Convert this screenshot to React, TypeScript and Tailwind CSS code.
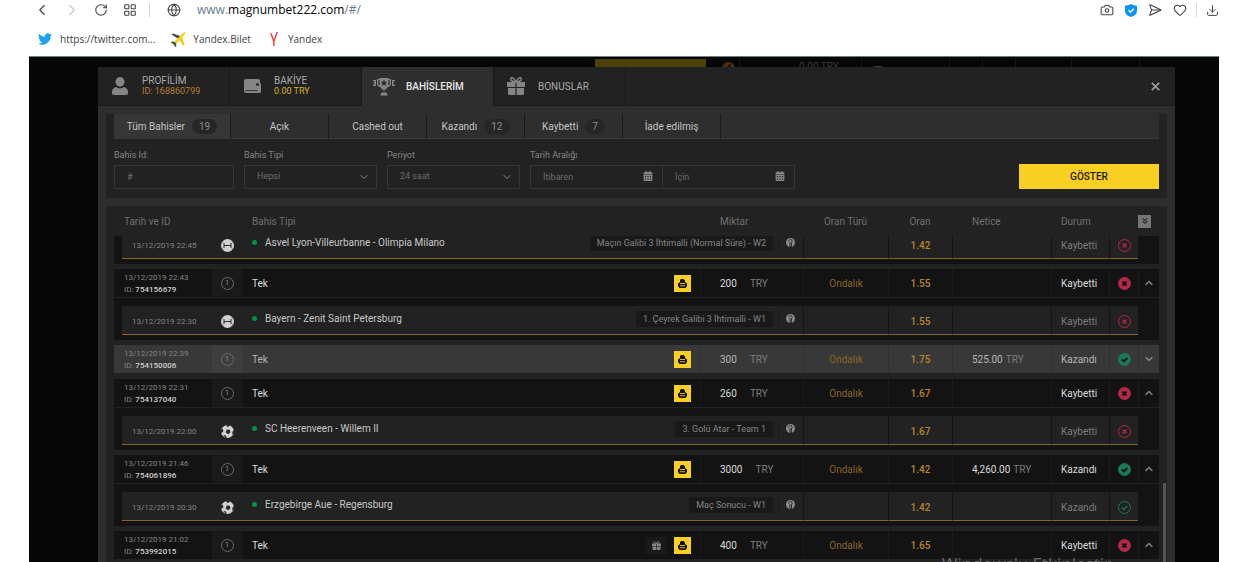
import React from 'react';
import {
  Camera,
  ChevronDown,
  ChevronLeft,
  ChevronRight,
  ChevronUp,
  ChevronsDown,
  Download,
  Globe,
  Heart,
  LayoutGrid,
  RotateCw,
  SendHorizontal,
} from 'lucide-react';
import { FaCalendarAlt, FaTwitter, FaYandexInternational } from 'react-icons/fa';

type Sport = 'basketball' | 'soccer';

type Bet = {
  date: string;
  id: string;
  amount: string;
  odd: string;
  result?: string;
  won: boolean;
  gift?: boolean;
  collapsed?: boolean;
};

type Leg = {
  date: string;
  sport: Sport;
  teams: string;
  pick: string;
  odd: string;
  won: boolean;
};

const columns =
  'grid grid-cols-[98px_30px_minmax(0,1fr)_103px_85px_64px_99px_58px_29px_21px]';

const rows: { bet?: Bet; leg?: Leg }[] = [
  {
    leg: {
      date: '13/12/2019 22:45',
      sport: 'basketball',
      teams: 'Asvel Lyon-Villeurbanne - Olimpia Milano',
      pick: 'Maçın Galibi 3 İhtimalli (Normal Süre) - W2',
      odd: '1.42',
      won: false,
    },
  },
  {
    bet: { date: '13/12/2019 22:43', id: '754156679', amount: '200', odd: '1.55', won: false },
    leg: {
      date: '13/12/2019 22:30',
      sport: 'basketball',
      teams: 'Bayern - Zenit Saint Petersburg',
      pick: '1. Çeyrek Galibi 3 İhtimalli - W1',
      odd: '1.55',
      won: false,
    },
  },
  {
    bet: {
      date: '13/12/2019 22:39',
      id: '754150006',
      amount: '300',
      odd: '1.75',
      result: '525.00',
      won: true,
      collapsed: true,
    },
  },
  {
    bet: { date: '13/12/2019 22:31', id: '754137040', amount: '260', odd: '1.67', won: false },
    leg: {
      date: '13/12/2019 22:00',
      sport: 'soccer',
      teams: 'SC Heerenveen - Willem II',
      pick: '3. Golü Atar - Team 1',
      odd: '1.67',
      won: false,
    },
  },
  {
    bet: {
      date: '13/12/2019 21:46',
      id: '754061896',
      amount: '3000',
      odd: '1.42',
      result: '4,260.00',
      won: true,
    },
    leg: {
      date: '13/12/2019 20:30',
      sport: 'soccer',
      teams: 'Erzgebirge Aue - Regensburg',
      pick: 'Maç Sonucu - W1',
      odd: '1.42',
      won: true,
    },
  },
  {
    bet: {
      date: '13/12/2019 21:02',
      id: '753992015',
      amount: '400',
      odd: '1.65',
      won: false,
      gift: true,
    },
  },
];

const UserIcon = () => (
  <svg width="16" height="18" viewBox="0 0 16 18" fill="#858585">
    <ellipse cx="8" cy="4.800" rx="4.500" ry="4.800" />
    <path d="M4 10c1.200.9 2.600 1.400 4 1.400s2.800-.5 4-1.400c2.200.6 4 2.500 4 4.700V16a2 2 0 0 1-2 2H2a2 2 0 0 1-2-2v-1.300C0 12.500 1.800 10.600 4 10z" />
  </svg>
);

const WalletIcon = () => (
  <svg width="17" height="14" viewBox="0 0 17 14" fill="#858585">
    <path d="M2 0h12a2 2 0 0 1 2 2v2a1 1 0 0 1 1 1v7.500a1.500 1.500 0 0 1-1.500 1.500H2a2 2 0 0 1-2-2V2a2 2 0 0 1 2-2z" />
    <path d="M12 4.500h3v2h-3zM1.500 11h12v.8h-12z" fill="#222222" />
  </svg>
);

const TrophyIcon = () => (
  <svg width="22" height="20" viewBox="0 0 22 20" fill="#858585">
    <path fillRule="evenodd" d="M6.500 1h9v1H18v4.500c0 2-1.500 3.500-3.500 3.800-.9 1.400-1.800 2.200-3 2.400V14h-1v-1.300c-1.200-.2-2.100-1-3-2.400C5.500 10 4 8.500 4 6.500V2h2.500zM5.300 3.300v3c0 1 .6 1.900 1.500 2.300-.3-1.600-.3-3.400-.3-5.300zm11.400 0h-1.200c0 1.900 0 3.700-.3 5.300.9-.4 1.500-1.300 1.500-2.300z" />
    <path d="m11 2.500 1 2.200 2.400.3-1.800 1.600.5 2.300L11 7.700 8.900 8.900l.5-2.300L7.600 5l2.400-.3z" fill="#2e2e2e" />
    <path d="M7.500 18c0-1.800 1.500-2.800 3.500-2.800s3.500 1 3.500 2.800v.5h-7z" />
    <path d="M0 3h3v6H0V7.800h1.500V6.600H.5V5.400h1V4.200H0zM19 3h3v1.200h-1.500v3.600H22V9h-3z" />
  </svg>
);

const GiftIcon = ({ size = 18, dark = '#222222' }: { size?: number; dark?: string }) => (
  <svg width={size} height={size} viewBox="0 0 18 18" fill="#858585">
    <path d="M0 5h18v5H0zM1 11h16v5.500a1.500 1.500 0 0 1-1.500 1.500h-13A1.500 1.500 0 0 1 1 16.500z" />
    <path d="M8.400 5h1.200v13H8.400z" fill={dark} />
    <path d="M9 5C7 1 5 0 4 1.300S4.500 5 9 5zm0 0c2-4 4-5 5-3.700S13.500 5 9 5z" fill="none" stroke="#858585" strokeWidth="1.500" />
  </svg>
);

const PlaneIcon = () => (
  <svg width="15" height="15" viewBox="0 0 15 15">
    <path d="M.5 2.500 2 1.500l8 2.700L7.500 7z" fill="#46494d" />
    <path d="M12.500 14 13.500 12.500l-2.700-8L8 7.500z" fill="#f6c614" />
    <path d="M12.600.6c1.200-.9 2.300.2 1.400 1.400L5.300 11.700 3.300 9.800z" fill="#fdcf08" />
    <path d="M3.300 9.800.5 9.500 0 10.500l2.500 1.700L4.300 15l1-.5V11.700z" fill="#46494d" />
  </svg>
);

const ShieldIcon = () => (
  <svg width="12" height="13" viewBox="0 0 12 13">
    <path d="M6 0c2 1.200 4 1.600 6 1.700V7c0 3-2.500 5-6 6-3.500-1-6-3-6-6V1.700C2 1.600 4 1.200 6 0z" fill="#0a93f5" />
    <path d="m3.500 6.300 2 2 3.300-3.600" fill="none" stroke="#fff" strokeWidth="1.400" />
  </svg>
);

const PrintIcon = () => (
  <svg width="9" height="9" viewBox="0 0 9 9" fill="#151200">
    <path d="M3 0h2.500L7 1.500V3l2 1.500V7L7.500 9h-6L0 7V4.500L2 3V1z" />
    <path d="M2 4h5v1H2zM2 6.300h5v1H2z" fill="#e0bc20" />
  </svg>
);

const InfoIcon = () => (
  <svg width="9" height="9" viewBox="0 0 9 9">
    <circle cx="4.500" cy="4.500" r="4.500" fill="#8a8a8a" />
    <path d="M2.800 3.400A1.700 1.700 0 1 1 5.500 4.600V8.500H3.900V4.800h.9" fill="none" stroke="#222222" strokeWidth=".9" />
  </svg>
);

const SportIcon = ({ sport }: { sport: Sport }) =>
  sport === 'basketball' ? (
    <svg width="13" height="13" viewBox="0 0 13 13">
      <circle cx="6.500" cy="6.500" r="6.500" fill="#d2d2d2" />
      <path d="M3 4v5M10 4v5M3 6.500h7" fill="none" stroke="#2a2a2a" strokeWidth="1" />
      <path d="M0 4.500 2.500 3M0 8.500 2.500 10M13 4.500 10.500 3M13 8.500 10.500 10" stroke="#8c8c8c" strokeWidth=".8" />
    </svg>
  ) : (
    <svg width="13" height="13" viewBox="0 0 13 13">
      <circle cx="6.500" cy="6.500" r="6.500" fill="#d2d2d2" />
      <path d="M6 4.200 9 5l.3 2.800L6.800 9.300 4.600 7.200zM5.500 0H9L7.800 1.800 5.500 1.500zM0 4.500l1.800-.8L2.500 6 .8 8 0 7.500zM13 5l-1.500 1.500L11.200 9l1 .8L13 8zM2.500 10l2 .3 1.500 2.500H4.500z" fill="#2a2a2a" />
    </svg>
  );

const StatusIcon = ({ won, outline }: { won: boolean; outline?: boolean }) => {
  const color = won ? '#1b7a56' : '#b22a49';
  const mark = outline ? color : '#151515';
  return (
    <svg width="13" height="13" viewBox="0 0 13 13" fill="none">
      <circle cx="6.500" cy="6.500" r="6" stroke={color} fill={outline ? 'none' : color} />
      {won ? (
        <path d="m3.800 6.500 2 2 3.600-3.500" stroke={mark} strokeWidth={outline ? 1.2 : 1.8} />
      ) : (
        <path d="m4.500 4.500 4 4m0-4-4 4" stroke={mark} strokeWidth={outline ? 1.2 : 1.8} />
      )}
    </svg>
  );
};

const BrowserBar = () => (
  <header className="font-['Open_Sans'] text-[#3c4043]">
    <div className="flex h-5 items-center pr-[30px] pl-[33px] text-[#3f4348]">
      <button aria-label="Geri" className="w-[30px]"><ChevronLeft size={18} strokeWidth={1.5} /></button>
      <button aria-label="İleri" className="w-[31px] text-[#c4c6c8]"><ChevronRight size={18} strokeWidth={1.5} /></button>
      <button aria-label="Yenile" className="w-[29px]"><RotateCw size={14} strokeWidth={1.8} /></button>
      <button aria-label="Hızlı erişim" className="w-[26px]"><LayoutGrid size={14} strokeWidth={1.8} /></button>
      <span className="h-3.5 w-px bg-[#d4d6d8]" />
      <Globe size={14} strokeWidth={1.8} className="ml-[17px]" />
      <span className="ml-4 text-[12px] text-[#6b7a8d]">
        www.<span className="text-black">magnumbet222.com</span>/#/
      </span>
      <div className="ml-auto flex items-center gap-[11px]">
        <button aria-label="Ekran görüntüsü"><Camera size={14} strokeWidth={1.8} /></button>
        <button aria-label="Koruma"><ShieldIcon /></button>
        <button aria-label="Gönder"><SendHorizontal size={14} strokeWidth={1.8} /></button>
        <button aria-label="Favori"><Heart size={14} strokeWidth={1.8} /></button>
      </div>
      <span className="mx-[9px] h-3.5 w-px bg-[#d4d6d8]" />
      <button aria-label="İndirilenler"><Download size={13} strokeWidth={1.8} /></button>
    </div>
    <nav className="flex h-9 items-center gap-4 pt-0.5 pl-[38px] text-[10px]">
      <a href="#twitter" className="flex items-center gap-2">
        <FaTwitter size={14} color="#1da1f2" />
        https://twitter.com...
      </a>
      <a href="#bilet" className="flex items-center gap-[7px]">
        <PlaneIcon />
        Yandex.Bilet
      </a>
      <a href="#yandex" className="flex items-center gap-[7px]">
        <FaYandexInternational size={14} color="#f33" />
        Yandex
      </a>
    </nav>
  </header>
);

// the site header is mostly hidden behind the account window
const SiteHeader = () => (
  <div className="flex h-[9px] overflow-hidden pl-[69px] text-[10px] text-[#3c3c3c]">
    <div className="flex-1" />
    <div className="mt-px h-3 w-[111px] bg-[#4d400a]" />
    <div className="mt-1 ml-4 h-[13px] w-[13px] rounded-full bg-[#4a3010] text-center text-[9px] leading-3 text-black">4</div>
    <div className="ml-1 h-3 w-px bg-[#161616]" />
    <div className="mt-[3px] ml-[59px] w-[62px] leading-3">0.00 TRY</div>
    <div className="w-[88px] border-l border-[#161616] pt-2 pl-3"><div className="h-px w-2 bg-[#3c3c3c]" /></div>
    <div className="w-[33px] border-l border-[#161616]" />
    <div className="w-[33px] border-l border-[#161616]" />
    <div className="w-[56px] border-l border-[#161616]" />
    <div className="w-[68px] border-l border-[#161616]" />
    <div className="w-20 border-l border-[#161616]" />
  </div>
);

const tabs = [
  { title: 'PROFİLİM', sub: 'ID: 168860799', subColor: 'text-[#b37f33]', icon: <UserIcon /> },
  { title: 'BAKİYE', sub: '0.00 TRY', subColor: 'text-[#d8b521]', icon: <WalletIcon /> },
  { title: 'BAHİSLERİM', active: true, icon: <TrophyIcon /> },
  { title: 'BONUSLAR', icon: <GiftIcon /> },
];

const ModalTabs = () => (
  <div className="flex h-[39px] bg-[#222222]">
    {tabs.map((tab) => (
      <button
        key={tab.title}
        className={`flex w-[132px] items-center border-r border-[#191919] text-left text-[10px] leading-[11px] ${
          tab.active ? 'bg-[#2e2e2e] font-medium text-[#e6e6e6]' : 'border-b text-[#a8a8a8]'
        }`}
      >
        <span className="flex w-11 shrink-0 justify-center">{tab.icon}</span>
        <span>
          {tab.title}
          {tab.sub && <span className={`block text-[9px] ${tab.subColor}`}>{tab.sub}</span>}
        </span>
      </button>
    ))}
    <div className="flex flex-1 items-center justify-end border-b border-[#191919] pr-[15px]">
      <button aria-label="Kapat">
        <svg width="9" height="9" viewBox="0 0 9 9" stroke="#9a9a9a" strokeWidth="1.800">
          <path d="m.8.8 7.400 7.400m0-7.400L.8 8.200" />
        </svg>
      </button>
    </div>
  </div>
);

const filters = [
  { label: 'Tüm Bahisler', count: 19, active: true },
  { label: 'Açık' },
  { label: 'Cashed out' },
  { label: 'Kazandı', count: 12 },
  { label: 'Kaybetti', count: 7 },
  { label: 'İade edilmiş' },
];

const StatusTabs = () => (
  <div className="flex h-[25px] border-x-8 border-[#222222] text-[10px] text-[#c4c4c4]">
    {filters.map((item) => (
      <button
        key={item.label}
        className={`flex items-center justify-center gap-[7px] border-r border-r-[#1a1a1a] ${
          item.active ? 'w-[117px] bg-[#363636]' : 'w-[98px] border-b border-b-[#3a3a3a]'
        }`}
      >
        {item.label}
        {item.count && (
          <span className="rounded-full bg-[#262626] px-[7px] leading-[15px] text-[#8c8c8c]">{item.count}</span>
        )}
      </button>
    ))}
    <div className="flex-1 border-b border-[#3a3a3a]" />
  </div>
);

const SelectField = ({ id, label, value }: { id: string; label: string; value: string }) => (
  <div>
    <label htmlFor={id} className="mb-1 block leading-3">{label}</label>
    <div className="relative">
      <select id={id} className="h-6 w-[133px] appearance-none border border-[#363636] bg-transparent px-3 text-[#6c6c6c]">
        <option>{value}</option>
      </select>
      <ChevronDown size={12} className="pointer-events-none absolute top-1.5 right-[7px] text-[#8a8a8a]" />
    </div>
  </div>
);

const DateField = ({ label, placeholder }: { label: string; placeholder: string }) => (
  <div className="relative">
    <input
      aria-label={label}
      placeholder={placeholder}
      className="block h-6 w-[133px] border border-[#363636] px-3 placeholder:text-[#6c6c6c]"
    />
    <FaCalendarAlt size={10} className="pointer-events-none absolute top-1.5 right-2.5 text-[#8a8a8a]" />
  </div>
);

const FilterBar = () => (
  <form className="flex items-end gap-2.5 bg-[#222222] px-2 pt-2.5 pb-[9px] text-[9px] text-[#858585]">
    <div>
      <label htmlFor="bet-id" className="mb-1 block leading-3">Bahis Id:</label>
      <input id="bet-id" placeholder="#" className="block h-6 w-[120px] border border-[#363636] px-3 placeholder:text-[#6c6c6c]" />
    </div>
    <SelectField id="bet-type" label="Bahis Tipi" value="Hepsi" />
    <SelectField id="period" label="Periyot" value="24 saat" />
    <fieldset>
      <legend className="mb-1 leading-3">Tarih Aralığı</legend>
      <div className="flex -space-x-px">
        <DateField label="Başlangıç tarihi" placeholder="İtibaren" />
        <DateField label="Bitiş tarihi" placeholder="İçin" />
      </div>
    </fieldset>
    <button type="button" className="ml-auto h-[25px] w-[140px] bg-[#f8d024] text-[10px] font-medium text-[#1b1700]">
      GÖSTER
    </button>
  </form>
);

const BetRow = ({ bet }: { bet: Bet }) => {
  const cell = bet.collapsed
    ? 'flex items-center border-l border-[#303030]'
    : 'flex items-center border-l border-[#1d1d1d]';
  return (
    <tr className={`${columns} h-7 ${bet.collapsed ? 'bg-[#383838] text-[#b4b4b4]' : 'bg-[#131313] text-[#dcdcdc]'}`}>
      <td className="pt-[3px] pl-2.5 text-[8px] leading-3 text-[#858585]">
        {bet.date}
        <br />
        ID: <b className="font-medium text-[#cfcfcf]">{bet.id}</b>
      </td>
      <td className={`flex items-center justify-center ${bet.collapsed ? 'bg-[#3e3e3e]' : 'bg-[#1a1a1a]'}`}>
        <span className="flex h-[13px] w-[13px] items-center justify-center rounded-full border border-[#6a6a6a] text-[8px] text-[#858585]">1</span>
      </td>
      <td className="flex items-center gap-[7px] pr-[9px] pl-2.5">
        <span className="mr-auto">Tek</span>
        {bet.gift && (
          <button aria-label="Bonus" className="flex h-[17px] w-[21px] items-center justify-center bg-[#1a1a1a]">
            <GiftIcon size={9} dark="#1a1a1a" />
          </button>
        )}
        <button aria-label="Yazdır" className="flex h-[17px] w-[17px] items-center justify-center bg-[#f8d024]">
          <PrintIcon />
        </button>
      </td>
      <td className={`${cell} gap-[13px] pl-[19px]`}>
        {bet.amount} <span className="text-[#7d7d7d]">TRY</span>
      </td>
      <td className={`${cell} justify-center text-[#8a6426]`}>Ondalık</td>
      <td className={`${cell} justify-center font-medium text-[#b8862f]`}>{bet.odd}</td>
      <td className={`${cell} gap-[3px] pl-[19px]`}>
        {bet.result}
        {bet.result && <span className="text-[#7d7d7d]">TRY</span>}
      </td>
      <td className={`${cell} pl-[9px]`}>{bet.won ? 'Kazandı' : 'Kaybetti'}</td>
      <td className={`${cell} justify-center`}><StatusIcon won={bet.won} /></td>
      <td className={`${cell} justify-center text-[#8a8a8a]`}>
        <button aria-label="Detaylar">
          {bet.collapsed ? (
            <ChevronDown size={12} strokeWidth={2.5} />
          ) : (
            <ChevronUp size={12} strokeWidth={2.5} />
          )}
        </button>
      </td>
    </tr>
  );
};

const LegRow = ({ leg, className = '' }: { leg: Leg; className?: string }) => {
  const cell = 'flex items-center border-b border-b-[#86672b] bg-[#222222]';
  const side = 'border-l border-l-[#161616] pt-[3px]';
  return (
    <tr className={`${columns} h-[42px] bg-[#131313] pt-2 pb-[5px] ${className}`}>
      <td className={`${cell} ml-2 pt-[3px] pl-2.5 text-[8px] text-[#858585]`}>{leg.date}</td>
      <td className={`${cell} justify-center bg-[#2a2a2a] pt-[3px]`}><SportIcon sport={leg.sport} /></td>
      <td className={`${cell} col-span-2 pr-2 pb-[3px] pl-2.5`}>
        <span className="h-[5px] w-[5px] rounded-full bg-[#04924b]" />
        <span className="mr-auto ml-2 text-[#c8c8c8]">{leg.teams}</span>
        <span className="bg-[#191919] px-[7px] text-[9px] leading-4 text-[#858585]">{leg.pick}</span>
        <span className="ml-[5px] h-4 w-px bg-[#191919]" />
        <span className="ml-[7px]"><InfoIcon /></span>
      </td>
      <td className={`${cell} ${side}`} />
      <td className={`${cell} ${side} justify-center font-medium text-[#b8862f]`}>{leg.odd}</td>
      <td className={`${cell} ${side}`} />
      <td className={`${cell} ${side} pl-[9px] text-[#7d7d7d]`}>{leg.won ? 'Kazandı' : 'Kaybetti'}</td>
      <td className={`${cell} ${side} justify-center`}><StatusIcon won={leg.won} outline /></td>
      <td />
    </tr>
  );
};

const BetTable = () => (
  <table className="block text-[10px]">
    <thead className="block">
      <tr className={`${columns} h-[30px] items-center text-left text-[#6f6f6f] [&>th]:font-normal`}>
        <th className="col-span-2 pl-2.5">Tarih ve ID</th>
        <th className="pl-2.5">Bahis Tipi</th>
        <th className="pl-5">Miktar</th>
        <th className="text-center">Oran Türü</th>
        <th className="text-center">Oran</th>
        <th className="pl-5">Netice</th>
        <th className="col-span-2 pl-2.5">Durum</th>
        <th>
          <button aria-label="Tümünü aç" className="flex h-[13px] w-[13px] items-center justify-center bg-[#757575] text-[#222222]">
            <ChevronsDown size={10} strokeWidth={2.5} />
          </button>
        </th>
      </tr>
    </thead>
    <tbody className="block overflow-hidden">
      {rows.map(({ bet, leg }, index) => (
        <React.Fragment key={index}>
          {bet && <BetRow bet={bet} />}
          {leg && <LegRow leg={leg} className={bet ? 'mt-px mb-[5px]' : '-mt-3.5 mb-[5px]'} />}
          {bet && !leg && <tr className="block h-1.5" />}
        </React.Fragment>
      ))}
    </tbody>
  </table>
);

const App: React.FC = () => {
  return (
    <div className="relative flex h-screen flex-col overflow-hidden bg-white">
      <BrowserBar />
      <main className="ml-[29px] mr-[30px] flex min-h-0 flex-1 flex-col border-t border-[#6f7f84] bg-[#060606] pt-px font-[Roboto]">
        <SiteHeader />
        <div className="ml-[69px] mr-[44px] flex min-h-0 flex-1 flex-col bg-[#2e2e2e]">
          <ModalTabs />
          <div className="flex min-h-0 flex-1 flex-col px-2 pt-2">
            <StatusTabs />
            <FilterBar />
            <div className="relative mt-2 min-h-0 flex-1 bg-[#222222] px-2">
              <BetTable />
              <div className="absolute right-px bottom-0 h-[79px] w-[3px] bg-[#555555]" />
            </div>
          </div>
        </div>
      </main>
      <div className="absolute right-[138px] -bottom-3.5 font-['Open_Sans'] text-[17px] leading-6 text-[#6a6a6a]">
        Windows'u Etkinleştir
      </div>
    </div>
  );
};

export default App;
